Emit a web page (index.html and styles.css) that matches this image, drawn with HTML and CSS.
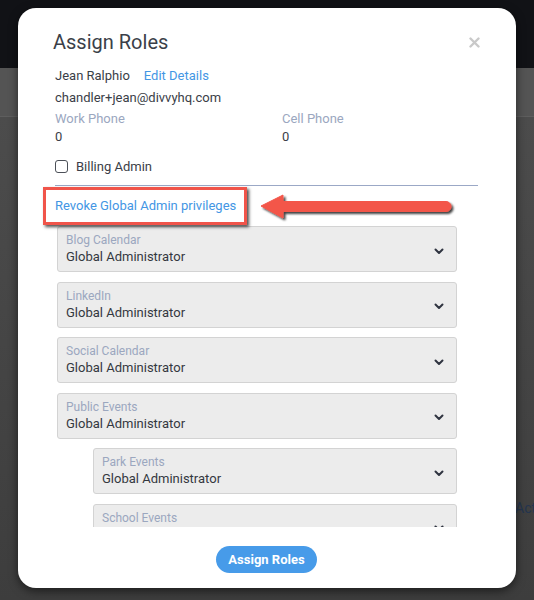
FILE: index.html
```html
<!DOCTYPE html>
<html>
<head>
<meta charset="utf-8">
<link rel="stylesheet" href="styles.css">
</head>
<body>
<div class="page">
  <div class="topbar"></div>
  <div class="subbar"></div>
  <div class="content">
    <span class="bg-text">Act</span>
  </div>

  <div class="modal">
    <div class="modal-head">
      <h1 class="title">Assign Roles</h1>
      <svg class="close" width="11" height="11" viewBox="0 0 11 11"><path d="M1.5 1.5 L9.5 9.5 M9.5 1.5 L1.5 9.5" stroke="#c9c9c9" stroke-width="2.4" stroke-linecap="round"/></svg>
    </div>
    <div class="row name-row">
      <span>Jean Ralphio</span>
      <a class="link">Edit Details</a>
    </div>
    <div class="row">chandler+jean@divvyhq.com</div>
    <div class="phones">
      <div class="phone">
        <div class="label">Work Phone</div>
        <div class="row-sm">0</div>
      </div>
      <div class="phone">
        <div class="label">Cell Phone</div>
        <div class="row-sm">0</div>
      </div>
    </div>
    <label class="check-row">
      <span class="checkbox"></span>
      <span>Billing Admin</span>
    </label>
    <div class="separator"></div>

    <div class="scroll">
      <div class="revoke-row">
        <a class="link">Revoke Global Admin privileges</a>
      </div>
      <div class="select">
        <div class="sel-text">
          <div class="sel-label">Blog Calendar</div>
          <div class="sel-value">Global Administrator</div>
        </div>
        <svg class="chev" viewBox="0 0 10 7" width="10" height="7"><path d="M1.5 1.5 L5 5 L8.5 1.5" fill="none" stroke="#2f3440" stroke-width="2" stroke-linecap="round" stroke-linejoin="round"/></svg>
      </div>
      <div class="select">
        <div class="sel-text">
          <div class="sel-label">LinkedIn</div>
          <div class="sel-value">Global Administrator</div>
        </div>
        <svg class="chev" viewBox="0 0 10 7" width="10" height="7"><path d="M1.5 1.5 L5 5 L8.5 1.5" fill="none" stroke="#2f3440" stroke-width="2" stroke-linecap="round" stroke-linejoin="round"/></svg>
      </div>
      <div class="select">
        <div class="sel-text">
          <div class="sel-label">Social Calendar</div>
          <div class="sel-value">Global Administrator</div>
        </div>
        <svg class="chev" viewBox="0 0 10 7" width="10" height="7"><path d="M1.5 1.5 L5 5 L8.5 1.5" fill="none" stroke="#2f3440" stroke-width="2" stroke-linecap="round" stroke-linejoin="round"/></svg>
      </div>
      <div class="select">
        <div class="sel-text">
          <div class="sel-label">Public Events</div>
          <div class="sel-value">Global Administrator</div>
        </div>
        <svg class="chev" viewBox="0 0 10 7" width="10" height="7"><path d="M1.5 1.5 L5 5 L8.5 1.5" fill="none" stroke="#2f3440" stroke-width="2" stroke-linecap="round" stroke-linejoin="round"/></svg>
      </div>
      <div class="select nested">
        <div class="sel-text">
          <div class="sel-label">Park Events</div>
          <div class="sel-value">Global Administrator</div>
        </div>
        <svg class="chev" viewBox="0 0 10 7" width="10" height="7"><path d="M1.5 1.5 L5 5 L8.5 1.5" fill="none" stroke="#2f3440" stroke-width="2" stroke-linecap="round" stroke-linejoin="round"/></svg>
      </div>
      <div class="select nested">
        <div class="sel-text">
          <div class="sel-label">School Events</div>
          <div class="sel-value">Global Administrator</div>
        </div>
        <svg class="chev" viewBox="0 0 10 7" width="10" height="7"><path d="M1.5 1.5 L5 5 L8.5 1.5" fill="none" stroke="#2f3440" stroke-width="2" stroke-linecap="round" stroke-linejoin="round"/></svg>
      </div>
    </div>

    <div class="footer">
      <button class="btn">Assign Roles</button>
    </div>

    <div class="annot-box"></div>
    <svg class="annot-arrow" width="210" height="34" viewBox="0 0 210 34">
      <defs>
        <filter id="sh" x="-10%" y="-40%" width="130%" height="200%">
          <feDropShadow dx="2" dy="2" stdDeviation="1.2" flood-color="#000" flood-opacity="0.75"/>
        </filter>
      </defs>
      <path d="M3 14 L25 3 L25 9.5 L188 9.5 A5 5 0 0 1 188 19.5 L25 19.5 L25 26 Z" fill="#f3564a" stroke="#f3564a" stroke-width="1" stroke-linejoin="round" filter="url(#sh)"/>
    </svg>
  </div>
</div>
</body>
</html>
```

FILE: styles.css
```css
* { box-sizing: border-box; }
html, body { margin: 0; padding: 0; }
body {
  width: 534px;
  height: 600px;
  overflow: hidden;
  font-family: Roboto, "Liberation Sans", sans-serif;
  background: #434343;
}
.page {
  position: relative;
  width: 534px;
  height: 600px;
  display: flex;
  flex-direction: column;
}
.topbar {
  height: 68px;
  background: #111216;
}
.subbar {
  height: 49px;
  background: #545454;
  border-bottom: 1px solid #5e5e5e;
}
.content {
  flex: 1;
  background: linear-gradient(#4c4c4c, #3d3d3d);
  position: relative;
}
.bg-text {
  position: absolute;
  left: 515px;
  top: 383px;
  font-size: 14px;
  color: #24354f;
}
.modal {
  position: absolute;
  left: 18px;
  top: 8px;
  width: 498px;
  height: 580px;
  background: #fff;
  border-radius: 18px;
  box-shadow: 0 3px 10px rgba(0, 0, 0, 0.55);
  padding: 22px 38px 15px 37px;
  display: flex;
  flex-direction: column;
  color: #3a3e47;
  font-size: 13px;
}
.modal-head {
  display: flex;
  justify-content: space-between;
  align-items: center;
  height: 24px;
  margin-bottom: 11px;
}
.title {
  margin: 0 0 0 -2px;
  font-size: 20px;
  font-weight: 400;
  line-height: 24px;
  color: #3b3f49;
}
.close {
  margin-right: -2px;
  margin-top: 1px;
}
.row {
  line-height: 22px;
  height: 22px;
}
.name-row {
  display: flex;
  gap: 14px;
}
.link {
  color: #4396e4;
  cursor: pointer;
}
.phones {
  display: flex;
}
.phone {
  flex: 0 0 227px;
}
.label {
  color: #9ba7bf;
  line-height: 19px;
}
.row-sm {
  line-height: 18px;
}
.check-row {
  display: flex;
  align-items: center;
  gap: 8px;
  height: 20px;
  margin-top: 10px;
}
.checkbox {
  width: 13px;
  height: 13px;
  border: 1px solid #4c5058;
  border-radius: 3px;
  background: #fff;
}
.separator {
  height: 1px;
  background: #9ba8c6;
  margin-top: 9px;
}
.scroll {
  height: 341px;
  overflow: hidden;
  padding: 10px 21px 0 0;
  display: flex;
  flex-direction: column;
}
.revoke-row {
  line-height: 20px;
  height: 20px;
  margin-bottom: 10px;
  flex-shrink: 0;
}
.select {
  flex-shrink: 0;
  height: 46px;
  margin: 0 0 9.5px 2px;
  background: #ececec;
  border: 1px solid #d3d3d3;
  border-radius: 3px;
  padding: 5px 12px 0 8px;
  display: flex;
  justify-content: space-between;
  align-items: center;
}
.select.nested {
  margin-left: 38px;
}
.sel-text {
  align-self: flex-start;
}
.sel-label {
  font-size: 12px;
  line-height: 16px;
  color: #9ba7bf;
}
.sel-value {
  font-size: 13px;
  line-height: 17px;
  color: #34383f;
}
.chev {
  margin-top: -1px;
}
.footer {
  margin-top: auto;
  display: flex;
  justify-content: center;
}
.btn {
  height: 27px;
  padding: 0 12px;
  border: none;
  border-radius: 14px;
  background: #479be9;
  color: #fff;
  font-family: Roboto, "Liberation Sans", sans-serif;
  font-size: 13px;
  font-weight: 700;
}
.annot-box {
  position: absolute;
  left: 25px;
  top: 179px;
  width: 204px;
  height: 38px;
  border: 3px solid #f0544a;
  box-shadow: 2px 2px 3px rgba(0, 0, 0, 0.7);
}
.annot-arrow {
  position: absolute;
  left: 240px;
  top: 184px;
}
```
